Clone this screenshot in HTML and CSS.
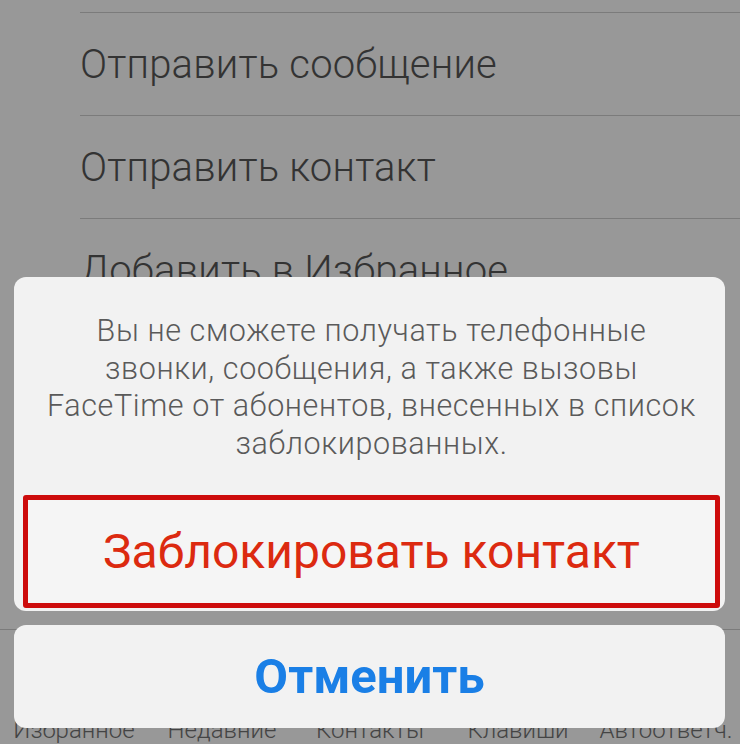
FILE: index.html
```html
<!DOCTYPE html>
<html lang="ru">
<head>
<meta charset="utf-8">
<link rel="stylesheet" href="styles.css">
</head>
<body>
<div class="screen">
  <div class="list">
    <div class="row"><span>Отправить сообщение</span></div>
    <div class="row"><span>Отправить контакт</span></div>
    <div class="row"><span>Добавить в Избранное</span></div>
  </div>
  <div class="tabbar">
    <span class="tab">Избранное</span>
    <span class="tab">Недавние</span>
    <span class="tab">Контакты</span>
    <span class="tab">Клавиши</span>
    <span class="tab">Автоответч.</span>
  </div>
  <div class="sheet">
    <div class="alert">
      <p class="message">Вы не сможете получать телефонные<br>звонки, сообщения, а также вызовы<br>FaceTime от абонентов, внесенных в список<br>заблокированных.</p>
      <div class="block-btn">Заблокировать контакт</div>
    </div>
    <div class="cancel">Отменить</div>
  </div>
</div>
</body>
</html>
```

FILE: styles.css
```css
html, body {
  margin: 0;
  padding: 0;
}
body {
  background: #989898;
  font-family: Roboto, "Liberation Sans", sans-serif;
}
.screen {
  position: relative;
  width: 740px;
  height: 744px;
  overflow: hidden;
  display: flex;
  flex-direction: column;
  background: #989898;
}
.list {
  flex: 1;
  padding-top: 12px;
}
.row {
  margin-left: 80px;
  height: 102px;
  border-top: 1px solid #7b7b7b;
  display: flex;
  align-items: center;
  font-size: 40px;
  font-weight: 300;
  color: #333;
  letter-spacing: 0.2px;
}
.tabbar {
  height: 114px;
  border-top: 1px solid #7b7b7b;
  display: grid;
  grid-template-columns: repeat(5, 1fr);
  align-items: end;
}
.tab {
  text-align: center;
  font-size: 24px;
  font-weight: 300;
  color: #444;
  line-height: 24px;
  padding-bottom: 2px;
}
.sheet {
  position: absolute;
  top: 277px;
  left: 14px;
  width: 711px;
  display: flex;
  flex-direction: column;
  gap: 14px;
}
.alert {
  background: #f2f2f2;
  border-radius: 12px;
  padding: 35px 5px 3px 9px;
  display: flex;
  flex-direction: column;
}
.message {
  margin: 0 0 33px 0;
  text-align: center;
  font-size: 30.5px;
  font-weight: 300;
  letter-spacing: 0.6px;
  line-height: 37.5px;
  color: #5a5a5a;
  white-space: nowrap;
}
.block-btn {
  height: 103px;
  border: 5px solid #cd0c0c;
  border-radius: 3px;
  background: #f5f5f5;
  display: flex;
  align-items: center;
  justify-content: center;
  font-size: 48px;
  color: #dc2a10;
}
.cancel {
  height: 103px;
  background: #f2f2f2;
  border-radius: 12px;
  display: flex;
  align-items: center;
  justify-content: center;
  font-size: 49px;
  font-weight: 700;
  color: #1a7fe6;
}
```
